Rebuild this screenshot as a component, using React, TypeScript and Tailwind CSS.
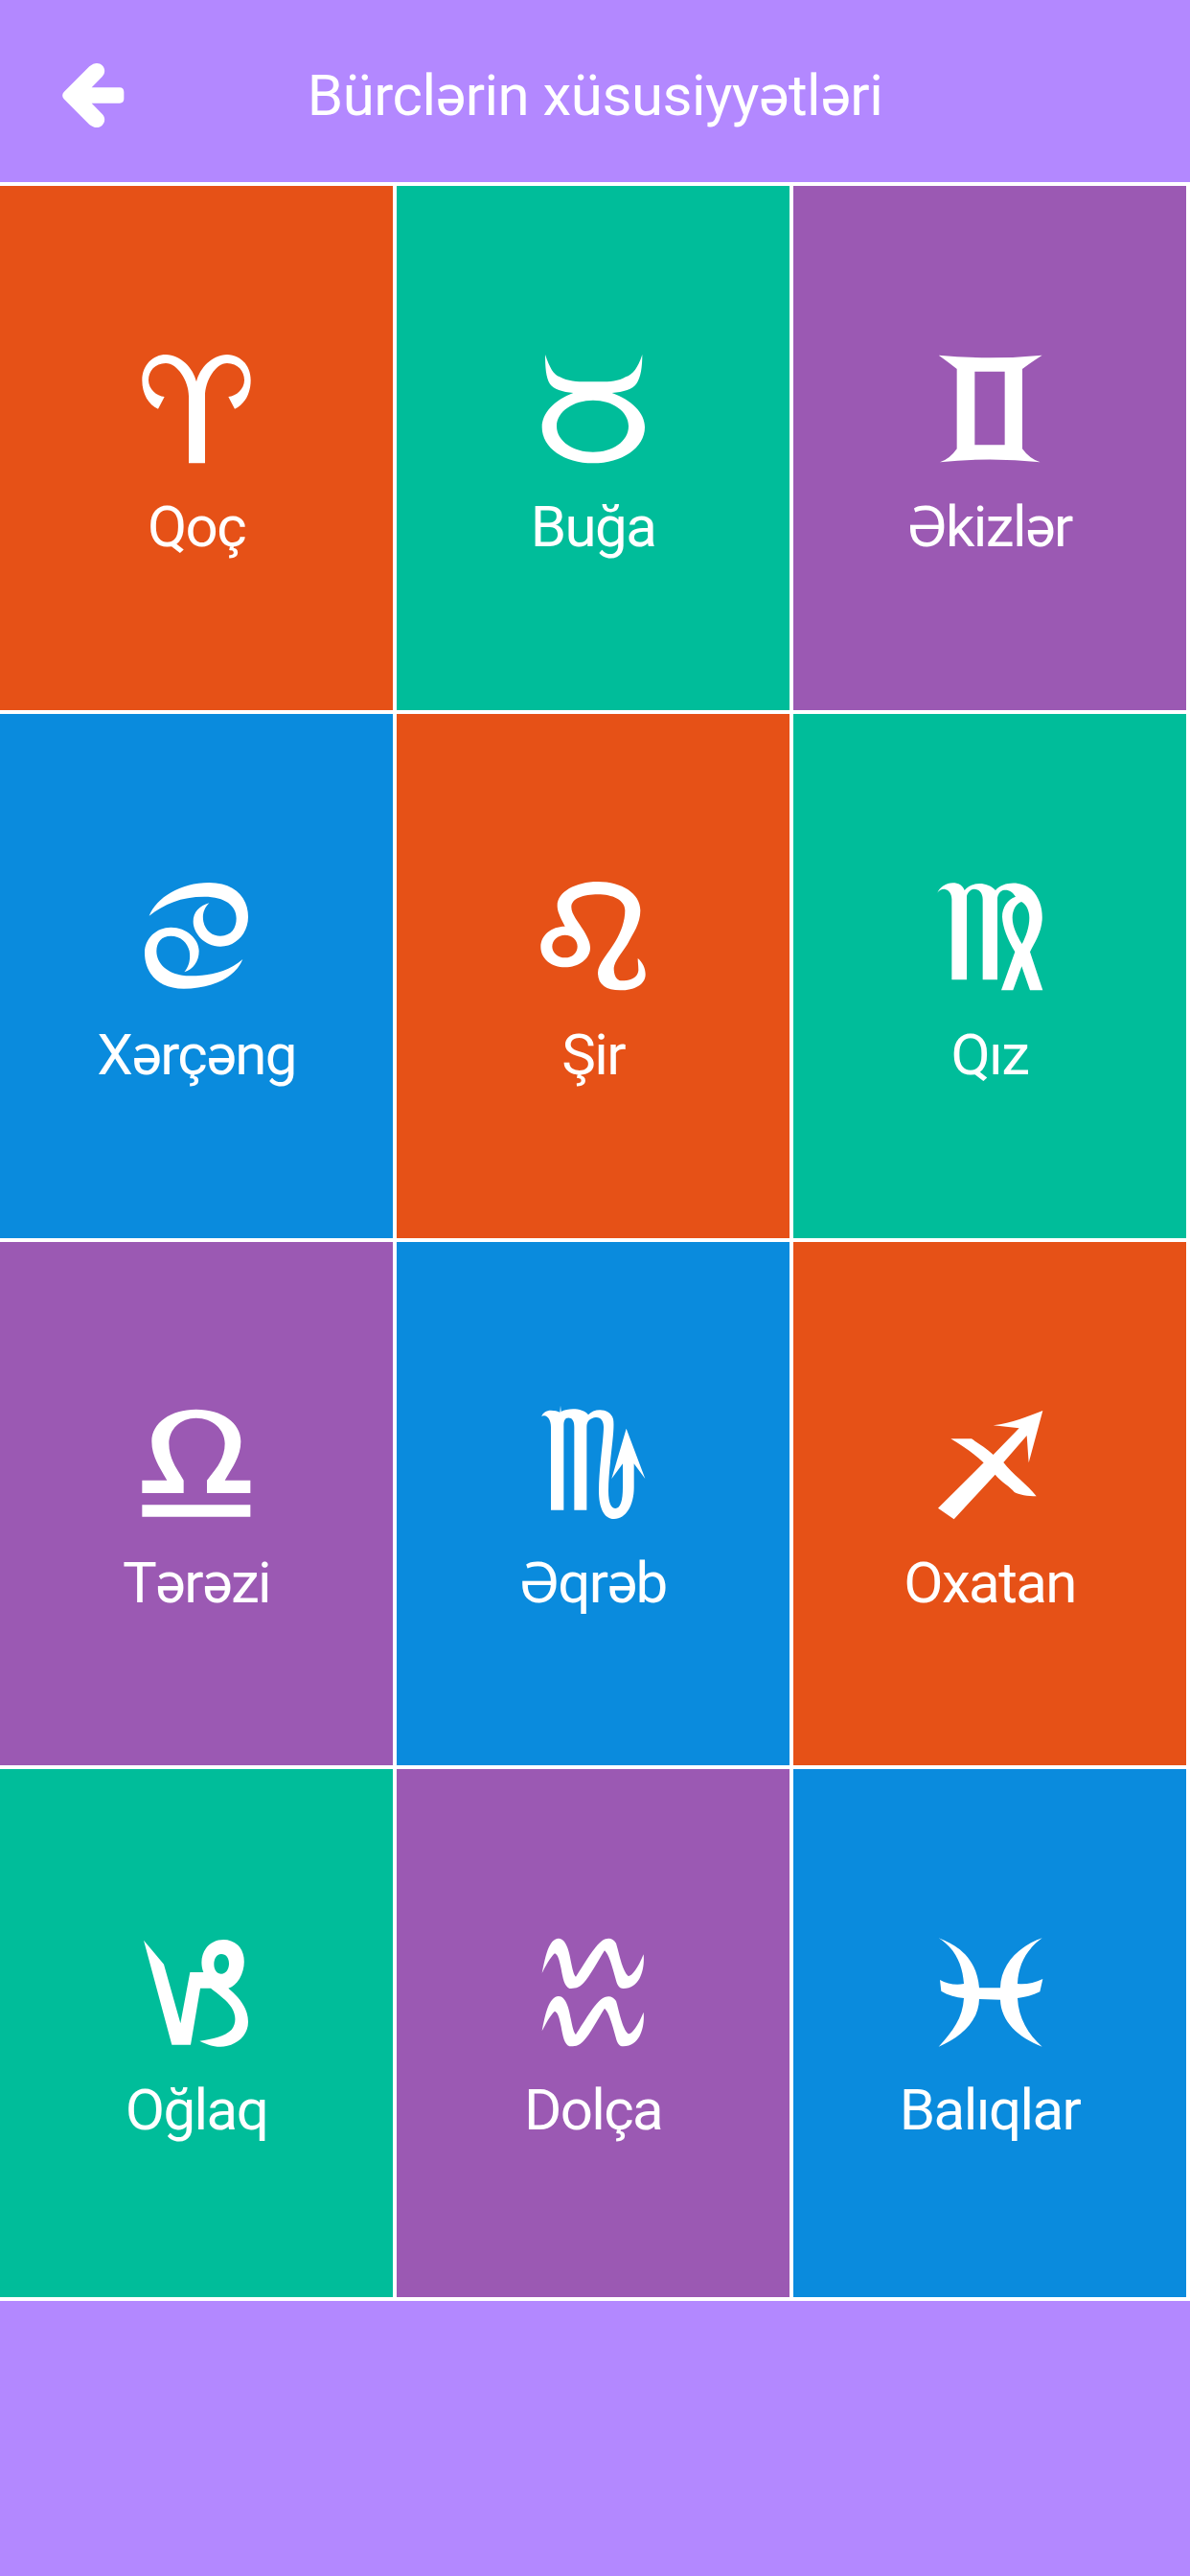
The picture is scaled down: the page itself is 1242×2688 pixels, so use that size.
const SIGNS = [
  { name: "Qoç", bg: "bg-[#e65117]", vb: "0 0 420 420", d: "M186 388 L186 178 C186 130 150 75 114 75 C80 75 60 100 60 128 C60 155 85 178 110 180 L90 218 C60 205 40 170 40 128 C40 80 75 48 114 48 C160 48 200 90 210 133 C220 90 260 48 306 48 C345 48 380 80 380 128 C380 170 360 205 330 218 L310 180 C335 178 360 155 360 128 C360 100 340 75 306 75 C270 75 237 130 237 178 L237 388 Z" },
  { name: "Buğa", bg: "bg-[#00bd9a]", vb: "0 0 420 420", d: "M60 48 C75 90 85 110 106 118 C135 135 175 133 210 133 C250 133 285 135 312 118 C335 110 350 90 364 48 C364 85 360 120 345 140 C335 155 305 165 269 168 C330 190 372 230 372 275 C372 340 300 388 210 388 C120 388 50 340 50 275 C50 230 90 190 148 168 C115 165 85 155 75 140 C62 120 60 85 60 48 Z M210 191 C150 191 96 225 96 272 C96 320 150 353 210 353 C270 353 321 320 321 272 C321 225 270 191 210 191 Z" },
  { name: "Əkizlər", bg: "bg-[#9b59b3]", vb: "0 0 420 420", d: "M50 50 Q210 66 374 50 Q335 75 312 93 L312 343 Q335 375 368 385 Q210 368 54 385 Q85 375 107 343 L107 93 Q85 75 50 50 Z M163 101 L163 331 L257 331 L257 101 Z" },
  { name: "Xərçəng", bg: "bg-[#0a8bdd]", vb: "0 0 420 420", d: "M62 152 C85 95 160 48 250 48 C330 48 372 95 372 155 C372 205 335 248 285 248 C235 248 200 205 200 170 C200 140 220 120 250 112 C232 130 228 150 232 170 C238 200 262 215 285 215 C320 215 335 190 335 160 C335 120 300 92 235 92 C160 92 110 115 62 152 Z M355 288 C332 345 260 380 170 380 C90 380 48 330 48 268 C48 222 85 188 130 188 C180 188 218 225 218 262 C218 295 200 320 172 328 C188 310 192 285 188 262 C182 235 160 215 130 215 C100 215 85 235 85 262 C85 305 125 340 190 340 C260 340 310 325 355 288 Z" },
  { name: "Şir", bg: "bg-[#e65117]", vb: "0 -2 420 420", d: "M122 183 C105 150 98 135 98 118 C98 75 155 43 225 43 C300 43 358 80 358 133 C358 175 335 205 318 238 C298 270 278 290 275 313 C275 340 285 353 300 353 C325 353 350 345 352 320 C352 305 350 295 350 283 C365 295 374 315 374 333 C374 365 340 383 295 383 C250 383 225 365 225 328 C225 300 260 265 280 230 C298 200 310 165 310 133 C310 100 270 83 225 83 C180 83 142 95 142 123 C142 145 165 170 180 195 C195 220 201 235 201 250 C201 285 165 311 122 311 C80 311 46 285 46 247 C46 210 80 183 122 183 Z M122 210 C100 210 82 225 82 246 C82 265 100 281 122 281 C145 281 161 265 161 246 C161 225 145 210 122 210 Z" },
  { name: "Qız", bg: "bg-[#00bd9a]", vb: "-6 0 420 420", d: "M40 80 C50 55 85 40 112 55 C118 60 122 65 125 72 C140 50 190 38 222 72 C245 45 300 40 335 70 C360 95 370 130 368 165 C365 205 345 235 330 265 L370 385 L330 385 L304 310 L277 385 L240 385 L283 265 C260 225 245 190 243 155 C243 125 260 100 285 92 C275 75 260 68 245 72 C235 76 230 85 228 95 L228 352 L182 352 L182 100 C182 80 170 68 155 68 C145 68 135 78 132 90 L132 352 L85 352 L85 100 C85 82 75 70 62 68 C52 68 45 72 40 80 Z M303 108 C285 115 275 135 275 158 C275 185 290 215 305 240 C318 215 328 185 328 158 C328 135 318 115 303 108 Z" },
  { name: "Tərəzi", bg: "bg-[#9b59b3]", vb: "0 -6 420 420", d: "M40 337 H379 V374 H40 Z M40 260 H118 C95 220 70 185 70 138 C70 80 130 38 209 38 C290 38 349 80 349 138 C349 185 322 220 299 260 H379 V300 H243 V260 C270 225 299 195 299 145 C299 100 260 65 209 65 C160 65 124 100 124 145 C124 195 150 225 170 260 V300 H40 Z" },
  { name: "Əqrəb", bg: "bg-[#0a8bdd]", vb: "-18 1 420 420", d: "M30 68 C35 55 45 48 60 48 C70 48 82 50 88 54 L90 33 L92 52 C115 40 160 40 177 62 C195 40 245 40 255 75 C262 110 240 220 240 300 C240 340 250 355 262 355 C278 355 285 330 285 290 L285 215 L250 262 L296 105 L355 262 L320 215 L320 290 C320 345 295 388 258 388 C225 388 210 350 210 300 C210 230 225 140 225 100 C225 80 215 68 200 70 C185 72 172 80 172 100 L172 360 L133 360 L133 100 C133 80 125 70 112 72 C105 72 100 80 100 95 L100 360 L60 360 L60 100 C60 80 50 65 40 65 C35 65 32 66 30 68 Z" },
  { name: "Oxatan", bg: "bg-[#e65117]", vb: "0 -6 420 420", d: "M376 42 L332 205 L326 120 L253 204 C280 240 330 275 356 310 C330 310 300 305 287 297 C275 280 245 265 227 242 L98 382 L48 347 L191 205 C160 175 120 150 88 130 L153 130 C175 145 200 160 221 180 L302 97 L221 88 C280 80 330 60 376 42 Z" },
  { name: "Oğlaq", bg: "bg-[#00bd9a]", vb: "0 -11 420 420", d: "M45 45 L108 120 L160 305 L190 145 L232 145 C222 120 225 90 240 70 C260 40 310 32 340 60 C365 85 365 130 345 165 C335 180 325 190 310 195 C340 220 372 255 372 300 C372 350 325 378 285 378 C260 378 240 370 220 360 C260 355 300 345 320 325 C335 305 335 280 320 255 C305 232 280 215 255 195 L222 195 L192 372 L133 372 Z M288 88 C272 88 265 105 265 120 C265 138 275 150 288 150 C303 150 312 135 312 118 C312 100 303 88 288 88 Z" },
  { name: "Dolça", bg: "bg-[#9b59b3]", vb: "0 -10 420 420", d: "M50 149 C60 100 70 42 102 40 C125 40 135 80 140 110 C145 135 150 157 156 160 C170 140 210 70 235 50 C250 38 270 35 282 55 C290 80 300 140 320 158 C330 160 350 135 368 90 C372 130 360 197 305 197 C290 197 285 185 280 165 C270 130 260 90 246 78 C225 110 200 160 180 180 C165 197 150 197 136 197 C120 190 115 165 110 135 C105 110 100 90 90 87 C75 100 60 130 50 149 Z M50 330 C60 281 70 223 102 221 C125 221 135 261 140 291 C145 316 150 338 156 341 C170 321 210 251 235 231 C250 219 270 216 282 236 C290 261 300 321 320 339 C330 341 350 316 368 271 C372 311 360 378 305 378 C290 378 285 366 280 346 C270 311 260 271 246 259 C225 291 200 341 180 361 C165 378 150 378 136 378 C120 371 115 346 110 316 C105 291 100 271 90 268 C75 281 60 311 50 330 Z" },
  { name: "Balıqlar", bg: "bg-[#0a8bdd]", vb: "0 -10 420 420", d: "M50 39 C120 65 170 110 177 195 L243 195 C245 120 300 65 374 39 C325 75 300 120 297 182 C320 185 350 180 376 167 L367 207 C345 218 320 225 297 227 C300 290 330 340 374 379 C300 350 245 300 243 232 L177 230 C175 300 120 350 50 379 C95 330 125 290 129 227 C105 225 80 218 58 205 L54 170 C75 182 105 188 129 182 C125 120 100 70 50 39 Z" },
];

export default function App() {
  return (
    <div className="min-h-[2688px] bg-[#b388ff] font-['Roboto','Liberation_Sans',sans-serif] text-white">
      <header className="flex h-[194px] items-center border-b-4 border-white px-[50px] pt-[10px]">
        <svg width="100" height="100" viewBox="0 0 300 300" className="shrink-0">
          <path fill="#fff" d="M50 138 L130 58 C145 45 160 45 170 55 C180 65 180 80 170 90 L137 124 H225 C233 124 238 130 238 138 V160 C238 168 233 173 225 173 H137 L170 207 C180 217 180 232 170 242 C160 252 145 252 130 240 L50 160 C44 154 44 144 50 138 Z" />
        </svg>
        <h1 className="flex-1 text-center text-[60px] font-normal leading-[72px] tracking-[-0.5px]">Bürclərin xüsusiyyətləri</h1>
        <div className="w-[100px] shrink-0" />
      </header>
      <div className="grid h-[2207px] grid-cols-3 grid-rows-[551px_550.5px_550.5px_555px]">
        {SIGNS.map((s) => (
          <div key={s.name} className={`flex flex-col items-center border-r-4 border-b-4 border-white pt-[160px] ${s.bg}`}>
            <svg width="140" height="140" viewBox={s.vb} className="shrink-0">
              <path fill="#fff" fillRule="evenodd" d={s.d} />
            </svg>
            <span className="mt-[20px] text-[60px] leading-[72px] tracking-[-1.6px]">{s.name}</span>
          </div>
        ))}
      </div>
    </div>
  );
}
